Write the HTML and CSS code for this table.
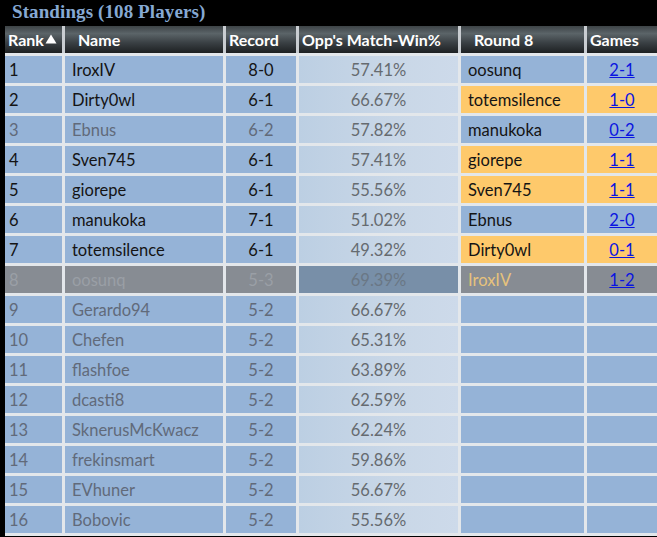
FILE: index.html
```html
<!DOCTYPE html>
<html>
<head>
<meta charset="utf-8">
<link rel="stylesheet" href="styles.css">
</head>
<body>
<div class="title">Standings (108 Players)</div>
<div class="board">
  <div class="row head">
    <div class="c h-rank">Rank<svg class="arrow" width="12" height="10" viewBox="0 0 12 10"><path d="M6 0.5 L11.5 9.5 L0.5 9.5 Z" fill="#fff"/></svg></div>
    <div class="c h-pad">Name</div>
    <div class="c">Record</div>
    <div class="c">Opp's Match-Win%</div>
    <div class="c h-pad">Round 8</div>
    <div class="c">Games</div>
  </div>
  <div class="row"><div class="c">1</div><div class="c name">IroxIV</div><div class="c rec">8-0</div><div class="c pct">57.41%</div><div class="c opp">oosunq</div><div class="c gm"><a href="#">2-1</a></div></div>
  <div class="row"><div class="c">2</div><div class="c name">Dirty0wl</div><div class="c rec">6-1</div><div class="c pct">66.67%</div><div class="c opp or">totemsilence</div><div class="c gm or"><a href="#">1-0</a></div></div>
  <div class="row dim"><div class="c">3</div><div class="c name">Ebnus</div><div class="c rec">6-2</div><div class="c pct">57.82%</div><div class="c opp">manukoka</div><div class="c gm"><a href="#">0-2</a></div></div>
  <div class="row"><div class="c">4</div><div class="c name">Sven745</div><div class="c rec">6-1</div><div class="c pct">57.41%</div><div class="c opp or">giorepe</div><div class="c gm or"><a href="#">1-1</a></div></div>
  <div class="row"><div class="c">5</div><div class="c name">giorepe</div><div class="c rec">6-1</div><div class="c pct">55.56%</div><div class="c opp or">Sven745</div><div class="c gm or"><a href="#">1-1</a></div></div>
  <div class="row"><div class="c">6</div><div class="c name">manukoka</div><div class="c rec">7-1</div><div class="c pct">51.02%</div><div class="c opp">Ebnus</div><div class="c gm"><a href="#">2-0</a></div></div>
  <div class="row"><div class="c">7</div><div class="c name">totemsilence</div><div class="c rec">6-1</div><div class="c pct">49.32%</div><div class="c opp or">Dirty0wl</div><div class="c gm or"><a href="#">0-1</a></div></div>
  <div class="row me"><div class="c">8</div><div class="c name">oosunq</div><div class="c rec">5-3</div><div class="c pct">69.39%</div><div class="c opp">IroxIV</div><div class="c gm"><a href="#">1-2</a></div></div>
  <div class="row dim"><div class="c">9</div><div class="c name">Gerardo94</div><div class="c rec">5-2</div><div class="c pct">66.67%</div><div class="c opp"></div><div class="c gm"></div></div>
  <div class="row dim"><div class="c">10</div><div class="c name">Chefen</div><div class="c rec">5-2</div><div class="c pct">65.31%</div><div class="c opp"></div><div class="c gm"></div></div>
  <div class="row dim"><div class="c">11</div><div class="c name">flashfoe</div><div class="c rec">5-2</div><div class="c pct">63.89%</div><div class="c opp"></div><div class="c gm"></div></div>
  <div class="row dim"><div class="c">12</div><div class="c name">dcasti8</div><div class="c rec">5-2</div><div class="c pct">62.59%</div><div class="c opp"></div><div class="c gm"></div></div>
  <div class="row dim"><div class="c">13</div><div class="c name">SknerusMcKwacz</div><div class="c rec">5-2</div><div class="c pct">62.24%</div><div class="c opp"></div><div class="c gm"></div></div>
  <div class="row dim"><div class="c">14</div><div class="c name">frekinsmart</div><div class="c rec">5-2</div><div class="c pct">59.86%</div><div class="c opp"></div><div class="c gm"></div></div>
  <div class="row dim"><div class="c">15</div><div class="c name">EVhuner</div><div class="c rec">5-2</div><div class="c pct">56.67%</div><div class="c opp"></div><div class="c gm"></div></div>
  <div class="row dim"><div class="c">16</div><div class="c name">Bobovic</div><div class="c rec">5-2</div><div class="c pct">55.56%</div><div class="c opp"></div><div class="c gm"></div></div>
</div>
</body>
</html>
```
FILE: styles.css
```css
html, body {
  margin: 0;
  padding: 0;
  background: #000;
}
body {
  width: 657px;
  height: 537px;
  overflow: hidden;
  font-family: Lato, "Open Sans", sans-serif;
  font-size: 16.5px;
}
.title {
  height: 26px;
  padding-left: 12px;
  color: #86a9d3;
  font-family: "Liberation Serif", serif;
  font-weight: bold;
  font-size: 19px;
  line-height: 24px;
  letter-spacing: 0.1px;
}
.board {
  margin-left: 5px;
  display: flex;
  flex-direction: column;
  gap: 3px;
  background: #e3e7eb;
  padding-bottom: 3px;
}
.row {
  display: grid;
  grid-template-columns: 57px 158px 70px 159px 123px 1fr;
  column-gap: 3px;
  height: 27px;
}
.c {
  display: flex;
  align-items: center;
  background: #95b3d7;
  color: #141414;
  padding-left: 4px;
  padding-top: 1px;
  white-space: nowrap;
  overflow: hidden;
}
.name { padding-left: 7px; }
.rec { justify-content: center; padding-left: 0; }
.pct {
  justify-content: center;
  padding-left: 0;
  color: #666b70;
  background: linear-gradient(to right, #bccfe3, #c9d7e7 60%, #cddaea);
}
.opp { padding-left: 7px; }
.gm { justify-content: center; padding-left: 0; }
.gm a { color: #0a14e0; text-decoration: underline; }
.or { background: #fec96b; }

.dim .c { color: #616a7a; }
.dim .pct { color: #666b70; }
.dim .opp { color: #141414; }

.me .c { background: #878c93; color: #9a9fa6; }
.me .pct { background: #788fa8; color: #6a7785; }
.me .opp { color: #e6c27c; }

.head {
  background: #c9cdd1;
  column-gap: 3px;
}
.head .c {
  background: linear-gradient(to bottom, #3d4346 0%, #5b6468 28%, #3a4044 62%, #1d2022 100%);
  color: #fff;
  font-weight: bold;
  font-size: 16px;
  padding-top: 0;
  padding-left: 3px;
}
.head .h-pad { padding-left: 13px; }
.head .h-rank { padding-left: 3px; }
.arrow { margin-left: 1px; margin-top: -2px; }
```
